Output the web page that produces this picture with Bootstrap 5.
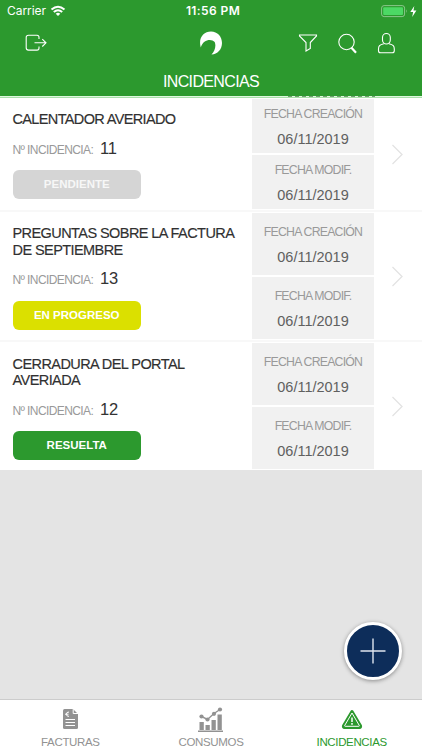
<!DOCTYPE html>
<html lang="es">
<head>
<meta charset="utf-8">
<meta name="viewport" content="width=device-width, initial-scale=1">
<title>Incidencias</title>
<link href="https://cdn.jsdelivr.net/npm/bootstrap@5.3.0/dist/css/bootstrap.min.css" rel="stylesheet">
<style>
body{font-family:"Liberation Sans",Arial,sans-serif;background:#e4e4e4;height:750px;overflow:hidden}
svg{display:block;flex:none}
.app-head{background:#2c992e;height:96px;color:#fff}
.status-line{height:22px;font-family:Inter,sans-serif;padding:0 5px 0 7px}
.status-line>div{flex:1 1 0}
.carrier{font-size:12px;letter-spacing:-.05px;line-height:22px}
.clock{font-size:12px;font-weight:600;letter-spacing:.4px;line-height:22px;padding-left:2px}
.tools{height:42px;padding:0 25px}
.tools>div{flex:1 1 0}
.tool-set{gap:18.5px}
.screen-title{font-size:16px;letter-spacing:-.65px;line-height:35px;height:32px}
.sliver{height:2px;background:#dff8df;border-bottom:1px solid #a9dfa9}
.cut{width:87px;height:1px;margin-left:288px;background:repeating-linear-gradient(90deg,#6f9f70 0 4px,#dff8df 4px 7px)}
.incident{border-bottom:2px solid #f8f8f8;background:#fff;height:130px}
.incident.first{height:114px}
.incident.last{border-bottom:0;height:128px}
.info{width:252px;padding:13px 0 0 12.5px}
.last .info{padding-top:13.5px}
.inc-title{font-size:14.5px;line-height:16.5px;letter-spacing:-.57px;color:#303030;-webkit-text-stroke:.15px #303030}
.first .inc-title{letter-spacing:-.64px}
.inc-no{font-size:12px;letter-spacing:-.6px;color:#999;height:18px;line-height:18px;margin-top:11px}
.inc-no b{font-weight:400;font-size:16.5px;letter-spacing:0;color:#333;margin-left:4px}
.state{width:128.5px;height:29px;border-radius:6px;font-weight:700;font-size:11.5px;line-height:29px;color:#fff;margin-top:13.5px}
.pend{background:#d5d5d5;color:#f7f7f7}.prog{background:#dbe000}.done{background:#2c992e}
.dates{width:122px;padding:1px 0}
.datebox{background:#f1f1f1;flex:1;padding-top:10px}
.datebox+.datebox{margin-top:2px}
.first .datebox{padding-top:6px}
.dlab{font-size:12.3px;letter-spacing:-.78px;color:#999;line-height:18px}
.dval{font-size:14.5px;letter-spacing:0;color:#606060;line-height:18px;margin-top:7px}
.plus{right:20px;top:622px;width:58px;height:58px;border:3px solid #fff;background:#0d2d5a;box-shadow:0 1px 4px rgba(0,0,0,.4)}
.tabs{height:51px;background:#fff;border-top:1px solid #ccc;font-size:11.5px;letter-spacing:-.35px;color:#929292;padding-top:7px}
.tabs a{flex:1;color:inherit;text-decoration:none;line-height:16px}
.tabs a.on{color:#2c992e}
.tabs svg{height:26px;margin-bottom:1px}
</style>
<script src="https://cdn.jsdelivr.net/npm/bootstrap@5.3.0/dist/js/bootstrap.bundle.min.js"></script>
</head>
<body class="position-relative d-flex flex-column">
<header class="app-head flex-shrink-0">
  <div class="status-line d-flex align-items-center">
    <div class="carrier d-flex align-items-center gap-1">Carrier
      <svg width="16" height="12" viewBox="0 0 16 12" fill="none" stroke="#fff" stroke-width="2"><path d="M1.5 4.6Q8-1 14.5 4.6M3.8 7Q8 3.4 12.2 7"/><path d="M8 11 5.7 8.7Q8 7 10.3 8.7Z" fill="#fff" stroke="none"/></svg>
    </div>
    <div class="clock text-center text-nowrap">11:56 PM</div>
    <div class="d-flex justify-content-end align-items-center">
      <svg width="36" height="13" viewBox="0 0 36 13"><rect x=".6" y=".6" width="23" height="11" rx="2.5" fill="none" stroke="#8bc78c"/><rect x="2.2" y="2.2" width="19.8" height="7.8" rx="1" fill="#4cd964"/><path d="M25 4.3q1.5 1.8 0 3.6z" fill="#8bc78c"/><path d="M33.300 1 29.300 7h2.800l-.9 5 4.200-6.500h-2.900z" fill="#fff"/></svg>
    </div>
  </div>
  <div class="tools d-flex align-items-center">
    <div><svg width="23" height="18" viewBox="0 0 23 18" fill="none" stroke="#fff" stroke-width="1.1"><path d="M14 5V3.5Q14 1.3 12 1.3H3.5Q1.2 1.3 1.2 3.5v10.3q0 2.3 2.3 2.3H12q2 0 2-2.2v-1.5M9.5 8.8H21M17.3 5.2 21 8.8l-3.7 3.7"/></svg></div>
    <svg width="24" height="26" viewBox="0 0 24 26"><path d="M1.800 17.500C-1 8 4.500 1.500 12 1.500c6.500 0 11 5 11 11.500 0 6.500-4.500 11.200-10.500 11.500 3.500-3.500 4.800-8.500 3.200-12.500C12.300 8.300 4 9.500 1.800 17.500Z" fill="#fff"/></svg>
    <div class="tool-set d-flex justify-content-end align-items-center">
      <svg width="20" height="20" viewBox="0 0 20 20" fill="none" stroke="#fff" stroke-width="1.1"><path d="M1.500 2h17v1L12.300 9.500v6L8 18V9.500L1.500 3z"/></svg>
      <svg width="22" height="22" viewBox="0 0 22 22" fill="none" stroke="#fff"><circle cx="9.500" cy="10" r="7.700" stroke-width="1.100"/><path d="m14.500 15.800 4.500 5" stroke-width="2.200"/></svg>
      <svg width="20" height="22" viewBox="0 0 20 22" fill="none" stroke="#fff" stroke-width="1.1"><rect x="5.500" y="1.500" width="7.800" height="10.500" rx="3.900"/><path d="M6.800 11.800C2.500 12.900 1.500 14 1.500 17v1.700q0 2 2 2h11.800q2 0 2-2V17c0-3-1-4.100-5.300-5.200"/></svg>
    </div>
  </div>
  <h1 class="screen-title text-center m-0 fw-normal">INCIDENCIAS</h1>
</header>
<div class="sliver flex-shrink-0"><div class="cut"></div></div>
<main>
  <section class="incident first d-flex">
    <div class="info"><div class="inc-title">CALENTADOR AVERIADO</div><div class="inc-no">Nº INCIDENCIA: <b>11</b></div><div class="state pend text-center">PENDIENTE</div></div>
    <div class="dates d-flex flex-column text-center"><div class="datebox"><div class="dlab">FECHA CREACIÓN</div><div class="dval">06/11/2019</div></div><div class="datebox"><div class="dlab">FECHA MODIF.</div><div class="dval">06/11/2019</div></div></div>
    <div class="flex-fill d-flex align-items-center justify-content-center"><svg width="14" height="22" viewBox="0 0 14 22" fill="none" stroke="#e3e3e3" stroke-width="1.3"><path d="m1.500 2 9.500 9.500L1.500 21"/></svg></div>
  </section>
  <section class="incident d-flex">
    <div class="info"><div class="inc-title">PREGUNTAS SOBRE LA FACTURA<br>DE SEPTIEMBRE</div><div class="inc-no">Nº INCIDENCIA: <b>13</b></div><div class="state prog text-center">EN PROGRESO</div></div>
    <div class="dates d-flex flex-column text-center"><div class="datebox"><div class="dlab">FECHA CREACIÓN</div><div class="dval">06/11/2019</div></div><div class="datebox"><div class="dlab">FECHA MODIF.</div><div class="dval">06/11/2019</div></div></div>
    <div class="flex-fill d-flex align-items-center justify-content-center"><svg width="14" height="22" viewBox="0 0 14 22" fill="none" stroke="#e3e3e3" stroke-width="1.3"><path d="m1.500 2 9.500 9.500L1.500 21"/></svg></div>
  </section>
  <section class="incident last d-flex">
    <div class="info"><div class="inc-title">CERRADURA DEL PORTAL<br>AVERIADA</div><div class="inc-no">Nº INCIDENCIA: <b>12</b></div><div class="state done text-center">RESUELTA</div></div>
    <div class="dates d-flex flex-column text-center"><div class="datebox"><div class="dlab">FECHA CREACIÓN</div><div class="dval">06/11/2019</div></div><div class="datebox"><div class="dlab">FECHA MODIF.</div><div class="dval">06/11/2019</div></div></div>
    <div class="flex-fill d-flex align-items-center justify-content-center"><svg width="14" height="22" viewBox="0 0 14 22" fill="none" stroke="#e3e3e3" stroke-width="1.3"><path d="m1.500 2 9.500 9.500L1.500 21"/></svg></div>
  </section>
</main>
<div class="plus position-absolute rounded-circle d-flex align-items-center justify-content-center"><svg width="26" height="26" viewBox="0 0 26 26" stroke="#dfe5ee" stroke-width="1.4"><path d="M13 .5v25M.5 13h25"/></svg></div>
<nav class="tabs d-flex mt-auto flex-shrink-0">
  <a href="#" class="d-flex flex-column align-items-center"><svg width="18" height="26" viewBox="0 0 18 26"><path d="M3.500 2H12l5 5v13.500q0 1.500-1.500 1.500h-12Q2 22 2 20.500v-17Q2 2 3.500 2Z" fill="#929292"/><path d="M12.200 2v4.500H17M4.500 12.500H14M4.500 15.500H14M4.500 18.500H14M8 5Q5.300 5 5.300 7.200T8 9.400M4 7.200h3.500" fill="none" stroke="#fff" stroke-width="1"/></svg>FACTURAS</a>
  <a href="#" class="d-flex flex-column align-items-center"><svg width="26" height="26" viewBox="0 0 26 26" fill="#929292"><path d="M0 23.500h25V25H0zM1.500 15h4.300v8H1.500zM7.500 18h4.300v5H7.500zM13.500 13h4.300v10h-4.300zM19.500 7.500h4.300V23h-4.300z"/><path d="m3.500 9.500 6 3L16 6.500l6-4" fill="none" stroke="#929292" stroke-width="1.400"/><circle cx="3.500" cy="9.500" r="2.100"/><circle cx="9.500" cy="12.500" r="2.100"/><circle cx="16" cy="6.800" r="2.100"/><circle cx="22" cy="2.500" r="2.100"/></svg>CONSUMOS</a>
  <a href="#" class="on d-flex flex-column align-items-center"><svg width="22" height="26" viewBox="0 0 22 26"><path d="M11 4.500 19.500 18.700Q20 20.500 18.500 20.500h-15Q2 20.500 2.500 18.700Z" fill="#2c992e" stroke="#2c992e" stroke-width="3" stroke-linejoin="round"/><path d="M11 6 18.300 18.500Q18.500 19.300 17.800 19.300H4.200Q3.500 19.300 3.700 18.500Z" fill="#2c992e" stroke="#fff" stroke-width="1" stroke-linejoin="round"/><path d="M11 10.500v4.500M11 16v1.700" stroke="#fff" stroke-width="1.500"/></svg>INCIDENCIAS</a>
</nav>
</body>
</html>
